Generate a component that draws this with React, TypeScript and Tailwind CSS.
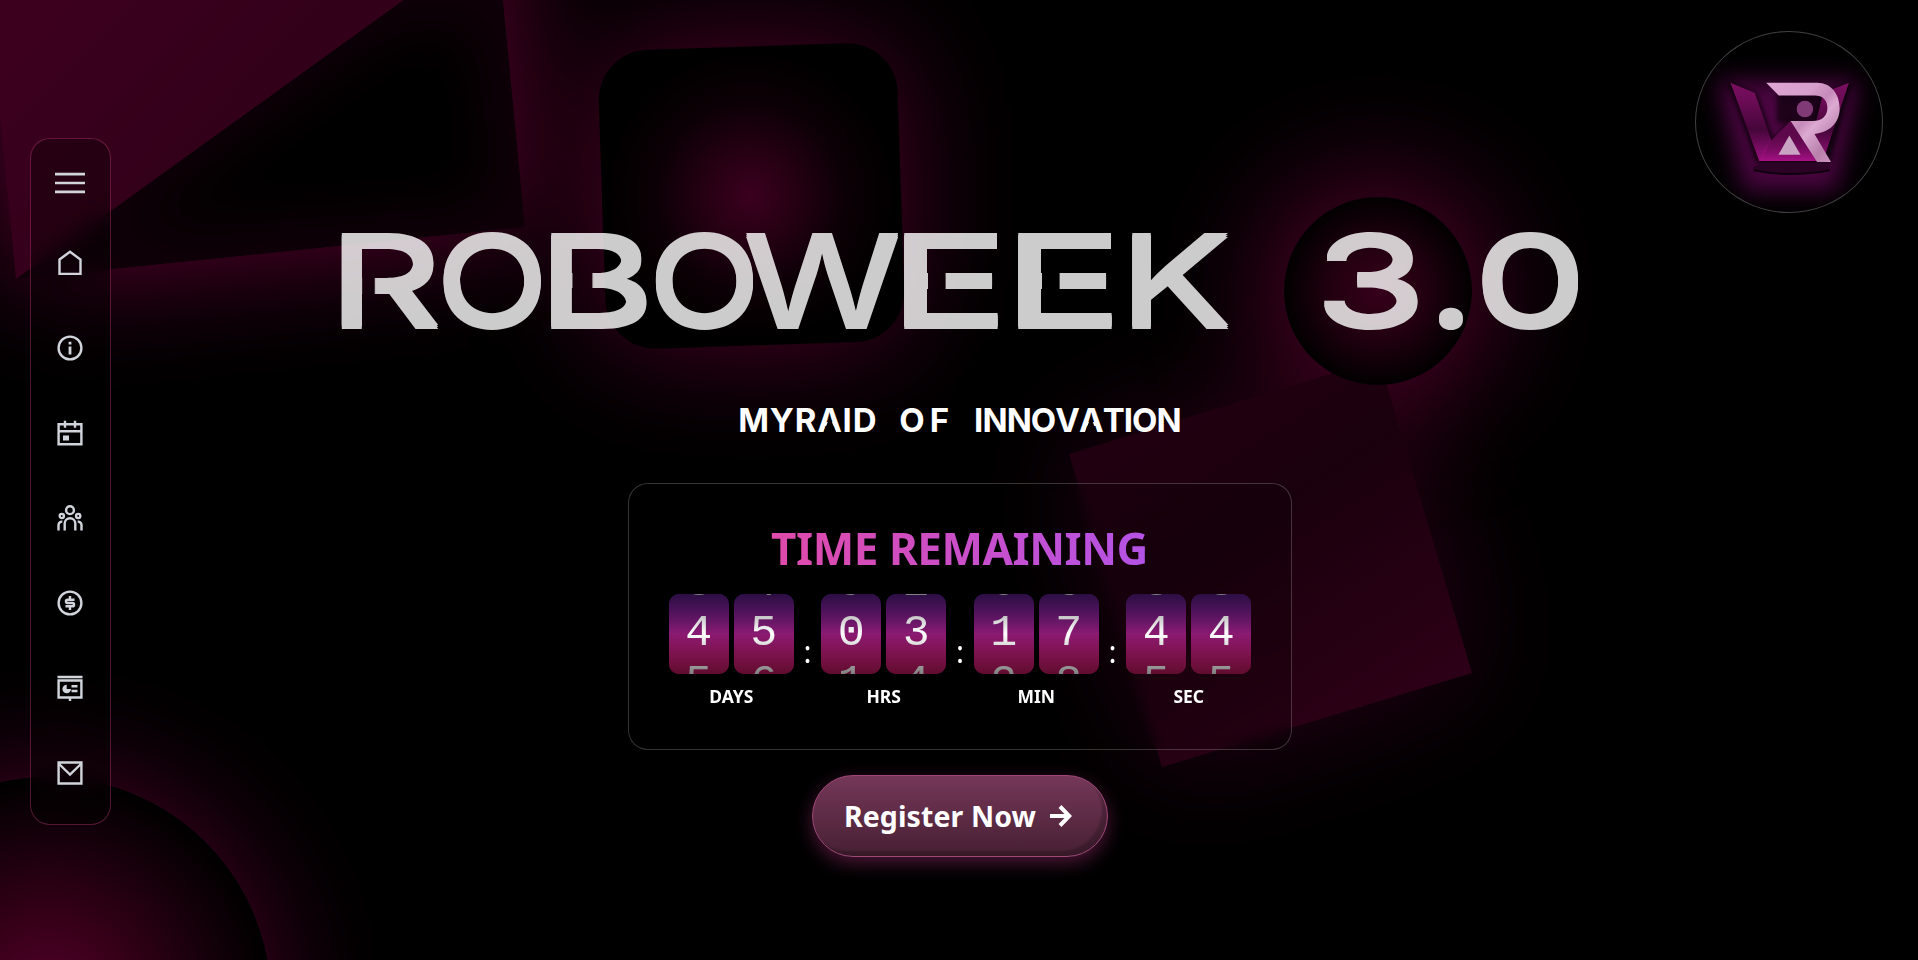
import React from "react";

type Glyph = { ch: string; box: string; ink: string };

const EGAP =
  "[mask:linear-gradient(#000,#000)_15px_68px/11px_25px_no-repeat_exclude,linear-gradient(#000,#000)]";
const BGAP =
  "[mask:linear-gradient(#000,#000)_15px_68px/14px_24px_no-repeat_exclude,linear-gradient(#000,#000)]";
const RGAP =
  "[mask:linear-gradient(#000,#000)_15px_70px/9px_34px_no-repeat_exclude,linear-gradient(#000,#000)]";

/* Each display letter sits in its own box so the wide face can be tuned letter by letter. */
const TITLE: Glyph[] = [
  { ch: "R", box: `w-[102px] scale-x-[1.41] ${RGAP}`, ink: "-ml-[9.5px]" },
  { ch: "O", box: "w-[108px] scale-x-[1.17]", ink: "-ml-[6.5px]" },
  { ch: "B", box: `w-[105px] scale-x-[1.43] ${BGAP}`, ink: "-ml-[10px]" },
  { ch: "O", box: "w-[90px] scale-x-[1.17]", ink: "-ml-[7px]" },
  { ch: "W", box: "w-[158px] scale-x-[1.26]", ink: "-ml-[3px]" },
  { ch: "E", box: `w-[114px] scale-x-[1.6] ${EGAP}`, ink: "-ml-[10px]" },
  { ch: "E", box: `w-[114px] scale-x-[1.6] ${EGAP}`, ink: "-ml-[10px]" },
  { ch: "K", box: "w-[192px] scale-x-[1.31]", ink: "-ml-[10px]" },
  { ch: "3", box: "w-[115px] scale-x-[1.43]", ink: "-ml-[7px]" },
  { ch: ".", box: "w-[43px] scale-x-[1.3]", ink: "-ml-[10px]" },
  { ch: "0", box: "w-[96px] scale-x-[1.41]", ink: "-ml-[6.5px]" },
];

const WORDS = [
  { text: "MYRAID", cls: "tracking-[0.8px]" },
  { text: "OF", cls: "-mr-[2px] tracking-[5px]" },
  { text: "INNOVATION", cls: "tracking-[-0.95px]" },
];

function Backdrop() {
  return (
    <svg className="absolute inset-0 h-full w-full" viewBox="0 0 1918 960" preserveAspectRatio="none" aria-hidden="true">
      <defs>
        <filter id="glow" x="-100%" y="-100%" width="300%" height="300%" colorInterpolationFilters="sRGB"><feGaussianBlur stdDeviation="60" /></filter>
        <filter id="soft" x="-60%" y="-60%" width="220%" height="220%" colorInterpolationFilters="sRGB"><feGaussianBlur stdDeviation="30" /></filter>
        <radialGradient id="squareIn"><stop offset="0" stopColor="#3b001e" /><stop offset="0.3" stopColor="#260013" /><stop offset="0.65" stopColor="#0b0005" /><stop offset="1" stopColor="#000" /></radialGradient>
        <radialGradient id="circleIn"><stop offset="0" stopColor="#36001b" /><stop offset="0.5" stopColor="#22000f" /><stop offset="0.82" stopColor="#0d0006" /><stop offset="1" stopColor="#020001" /></radialGradient>
        <radialGradient id="cornerIn"><stop offset="0" stopColor="#520029" /><stop offset="0.35" stopColor="#380019" /><stop offset="0.68" stopColor="#1a000c" /><stop offset="1" stopColor="#000" /></radialGradient>
        <linearGradient id="tri" gradientUnits="userSpaceOnUse" x1="60" y1="0" x2="215" y2="150"><stop offset="0" stopColor="#3c001e" /><stop offset="1" stopColor="#320019" /></linearGradient>
        <linearGradient id="tile" gradientUnits="userSpaceOnUse" x1="1180" y1="420" x2="1370" y2="720"><stop offset="0" stopColor="#200010" /><stop offset="0.35" stopColor="#1a000d" /><stop offset="1" stopColor="#2c0016" /></linearGradient>
        <clipPath id="triClip"><path d="M16 279 403 0 503 0 525 227Z" /></clipPath>
      </defs>
      <rect width="1918" height="960" fill="#000" />
      <path d="M-35-200H485L525 227 16 279Z" fill="#5c0030" filter="url(#glow)" />
      <rect x="601" y="46" width="298" height="298" rx="50" fill="#4c0027" filter="url(#glow)" />
      <path d="M1069 454 1379 359 1472 673 1162 768Z" fill="#260014" filter="url(#glow)" />
      <circle cx="1378" cy="291" r="108" fill="#56002c" filter="url(#glow)" />
      <circle cx="48" cy="1000" r="223" fill="#4a0026" filter="url(#glow)" />
      <path d="M-11 0H403L16 279Z" fill="url(#tri)" />
      <g clipPath="url(#triClip)">
        <path d="M16 279 403 0 503 0 525 227Z" fill="#100008" />
        <path d="M110 235 395 30 475 20 495 205Z" fill="#000" filter="url(#soft)" />
      </g>
      <g transform="rotate(-1.9 750 196)">
        <rect x="602" y="46.500" width="299" height="299" rx="50" fill="#000" />
        <circle cx="750" cy="196" r="148" fill="url(#squareIn)" />
      </g>
      <path d="M1069 454 1379 359 1472 673 1162 767Z" fill="url(#tile)" />
      <circle cx="1378" cy="291" r="94" fill="url(#circleIn)" />
      <circle cx="48" cy="1000" r="223" fill="url(#cornerIn)" />
    </svg>
  );
}

function Icon({ children }: { children: React.ReactNode }) {
  return (
    <svg className="h-[26px] w-[26px]" viewBox="0 0 26 26" fill="none" stroke="currentColor" strokeWidth="2.4">
      {children}
    </svg>
  );
}

const NAV: React.ReactNode[] = [
  <path key="h" d="M2.500 9.500 13 1.700 23.500 9.500V23.900H2.500Z" />,
  <g key="i"><circle cx="13" cy="13" r="11.400" /><path d="M13 6.800v2.600M13 11.500v8" strokeWidth="2.800" /></g>,
  <g key="c"><path d="M1.600 4.200H24.400V24.300H1.600ZM1.600 11.300H24.400M8 .800V7.800M18 .800V7.800" /><path d="M6 15.500h6v5H6Z" fill="currentColor" stroke="none" /></g>,
  <g key="p"><circle cx="13" cy="5.200" r="3.900" /><circle cx="4.800" cy="11" r="2.100" /><circle cx="21.200" cy="11" r="2.100" /><path d="M7.700 25.500V18.500a5.300 5.300 0 0 1 10.600 0V25.500M1.500 25.500V20a3.400 3.400 0 0 1 3.800-3.300M24.500 25.500V20a3.400 3.400 0 0 0-3.800-3.300" /></g>,
  <g key="d"><circle cx="13" cy="13" r="11.400" /><path d="M17.500 9.700H10.600a1.650 1.650 0 0 0 0 3.300h4.800a1.650 1.650 0 0 1 0 3.300H8.500M13 6v3.700M13 16.300V20" /></g>,
  <g key="s"><path d="M.500 2H25.500M1.600 5.500H24.400V22.500H1.600ZM13 22.500V26M14.500 11.200h6M14.500 16h6" /><path d="M9.700 9.700v4.300h4.300A4.300 4.300 0 1 1 9.700 9.700Z" fill="currentColor" stroke="none" /></g>,
  <path key="m" d="M1.600 2.500H24.400V23.500H1.600ZM1.600 3.500 13 14.500 24.400 3.500" />,
];

function Sidebar() {
  return (
    <nav className="absolute top-[138px] left-[30px] flex h-[687px] w-[81px] flex-col items-center rounded-[20px] border border-[#ff4d9d]/30 bg-black/30 pt-[33px] pr-px text-[#d1d5db] backdrop-blur-md">
      <svg className="h-[22px] w-[30px]" viewBox="0 0 30 22" stroke="currentColor" strokeWidth="2.700"><path d="M0 2.200H30M0 11H30M0 19.800H30" /></svg>
      <div className="mt-[56px] flex flex-col gap-[59px]">
        {NAV.map((n, i) => (
          <a key={i} href="#" className="block"><Icon>{n}</Icon></a>
        ))}
      </div>
    </nav>
  );
}

function Logo() {
  return (
    <div className="absolute top-[31px] left-[1695px] h-[182px] w-[188px] overflow-hidden rounded-[50%] border border-white/25 bg-black">
      <svg className="h-full w-full" viewBox="46 34 562 544">
        <defs>
          <filter id="lg" x="-60%" y="-60%" width="220%" height="220%" colorInterpolationFilters="sRGB"><feGaussianBlur stdDeviation="36" /></filter>
          <filter id="ls" x="-30%" y="-30%" width="160%" height="160%" colorInterpolationFilters="sRGB"><feGaussianBlur stdDeviation="8" /></filter>
          <filter id="l1" x="-30%" y="-30%" width="160%" height="160%" colorInterpolationFilters="sRGB"><feGaussianBlur stdDeviation="2" /></filter>
          <linearGradient id="wing" x1="0" y1="0" x2="0" y2="1"><stop offset="0" stopColor="#7a0f60" /><stop offset="0.25" stopColor="#6a0b54" /><stop offset="0.6" stopColor="#45063a" /><stop offset="0.85" stopColor="#7c0c65" /><stop offset="1" stopColor="#9c107f" /></linearGradient>
          <linearGradient id="base" x1="0" y1="0" x2="0" y2="1"><stop offset="0" stopColor="#7a0a62" stopOpacity="0" /><stop offset="1" stopColor="#a81186" /></linearGradient>
          <linearGradient id="rr" x1="0" y1="0" x2="1" y2="1"><stop offset="0" stopColor="#dfa6d3" /><stop offset="0.35" stopColor="#d79fcb" /><stop offset="0.5" stopColor="#c58ab9" /><stop offset="0.6" stopColor="#dcaad2" /><stop offset="0.8" stopColor="#b880ab" /><stop offset="1" stopColor="#d79bca" /></linearGradient>
        </defs>
        <path d="M110 180 540 180 470 515 190 515Z" fill="#4a0540" filter="url(#lg)" />
        <path d="M140 182 230 222 280 360 330 300 400 320 430 222 518 182 450 432 230 432Z" fill="#000" opacity="0.75" filter="url(#ls)" />
        <path d="M290 215H430V310H290Z" fill="#000" opacity="0.6" filter="url(#ls)" />
        <ellipse cx="335" cy="446" rx="118" ry="17" fill="#2b0324" filter="url(#l1)" />
        <path d="M220 452Q335 475 450 452" fill="none" stroke="#100010" strokeWidth="6" filter="url(#l1)" />
        <path d="M150 187 224 218 274 362 332 302 395 362 430 218 508 187 430 424H237Z" fill="url(#wing)" />
        <path d="M274 362 332 302 390 362 420 424H240Z" fill="#5e084c" />
        <path d="M270 350H400L425 424H237Z" fill="url(#base)" />
        <path d="M328 347 362 405H295Z" fill="#caa4c3" />
        <circle cx="375" cy="267" r="25" fill="#803a76" />
        <path d="M258 187H412C455 187 480 222 480 265C480 305 455 335 404 342L454 427H412L332 303H398C425 303 443 290 443 263C443 240 428 226 405 226H296Z" fill="url(#rr)" />
      </svg>
    </div>
  );
}

function Digit({ prev, cur, next }: { prev: string; cur: string; next: string }) {
  return (
    <div className="relative h-20 w-[60px] overflow-hidden rounded-[10px] bg-linear-to-b/srgb from-[#581c87] to-[#be185d]">
      <div className="-mt-[35px] flex flex-col items-center font-['Liberation_Mono',monospace] text-[45px] leading-[50px] text-white">
        <span>{prev}</span>
        <span>{cur}</span>
        <span>{next}</span>
      </div>
      <div className="absolute inset-0 bg-linear-to-b/srgb from-black/50 via-transparent to-black/50" />
    </div>
  );
}

const CLOCK = [
  { label: "DAYS", digits: [["3", "4", "5"], ["4", "5", "6"]] },
  { label: "HRS", digits: [["9", "0", "1"], ["2", "3", "4"]] },
  { label: "MIN", digits: [["0", "1", "2"], ["6", "7", "8"]] },
  { label: "SEC", digits: [["3", "4", "5"], ["3", "4", "5"]] },
];

export default function App() {
  return (
    <div className="relative h-[960px] w-full overflow-hidden bg-black font-['Noto_Sans',sans-serif] text-white">
      <Backdrop />
      <main className="relative flex flex-col items-center pl-px">
        <h1 className="mt-[201px] flex h-[160px] w-[1238px] font-['Inter',sans-serif] text-[126.5px] leading-[160px] font-medium text-white opacity-80 [text-shadow:0_2px_0_#fff,0_-2px_0_#fff]">
          {TITLE.map((g, i) => (
            <span key={i} className={`origin-left ${g.box}`}><span className={g.ink}>{g.ch}</span></span>
          ))}
        </h1>
        <h2 className="mt-[39px] flex h-[40px] gap-[22px] font-['Inter',sans-serif] text-[33px] leading-[40px] font-bold">
          {WORDS.map((w) => (
            <span key={w.text} className={w.cls}>
              {w.text.split("").map((c, i) => (
                <span
                  key={i}
                  className={
                    c === "A"
                      ? "inline-block [clip-path:polygon(-5%_0,105%_0,105%_100%,88%_100%,50%_43%,12%_100%,-5%_100%)]"
                      : "inline-block"
                  }
                >
                  {c}
                </span>
              ))}
            </span>
          ))}
        </h2>
        <section className="mt-[43px] flex h-[267px] w-[664px] flex-col items-center rounded-[20px] border border-white/20 bg-black/15 px-10 pt-[34px] backdrop-blur-[6px]">
          <h3 className="w-full bg-linear-to-r/srgb from-[#ec4899] to-[#a855f7] bg-clip-text text-center text-[44px] leading-[60px] font-bold tracking-[-0.45px] text-transparent">TIME REMAINING</h3>
          <div className="mt-[16px] flex gap-[9px] pl-px">
            {CLOCK.map((g, i) => (
              <React.Fragment key={g.label}>
                {i > 0 && <span className="w-[9.5px] pt-[38px] text-center text-[30px] leading-[40px]">:</span>}
                <div className="flex w-[125px] flex-col items-center">
                  <div className="flex gap-[5px]">
                    {g.digits.map((d, j) => <Digit key={j} prev={d[0]} cur={d[1]} next={d[2]} />)}
                  </div>
                  <span className="mt-[9px] text-[17.500px] leading-[26px] font-bold">{g.label}</span>
                </div>
              </React.Fragment>
            ))}
          </div>
        </section>
        <button className="mt-[25px] flex h-[82px] w-[296px] items-center justify-center gap-[14px] rounded-full border border-[#a04878] bg-linear-to-b/srgb from-[#753758] to-[#462033] pr-[3px] text-[28.5px] font-bold shadow-[0_6px_18px_#4c1636,inset_-6px_-6px_2px_-1px_rgba(0,0,0,0.220)]">
          <span className="tracking-[0.1px]">Register Now</span>
          <svg className="h-[22px] w-[22px]" viewBox="0 0 22 22" fill="none" stroke="currentColor" strokeWidth="4"><path d="M0 11H19M10 1.500 19.300 11 10 20.500" /></svg>
        </button>
      </main>
      <Sidebar />
      <Logo />
    </div>
  );
}
